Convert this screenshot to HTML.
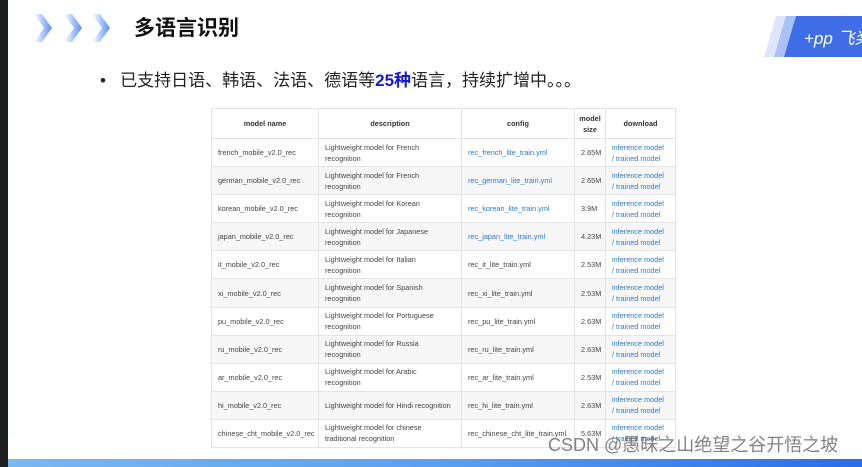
<!DOCTYPE html><html><head><meta charset="utf-8"><style>
*{margin:0;padding:0;box-sizing:border-box}
body{width:862px;height:467px;overflow:hidden;background:#fff;position:relative;font-family:"Liberation Sans","Noto Sans CJK SC",sans-serif}
.l{position:absolute;left:0;top:0;width:8px;height:467px;background:#1e1f1f}
.bar{position:absolute;left:8px;top:459px;width:854px;height:8px;background:linear-gradient(90deg,#7ab8f0,#5aa0f0 50%,#2a6ee8)}
.title{position:absolute;left:134px;top:12px;font-size:21px;font-weight:bold;color:#111}
.bul{position:absolute;left:100px;top:66px;font-size:17px;color:#222;white-space:nowrap}
.bul b{color:#1818d0}
table{position:absolute;left:211px;top:108px;width:465px;border-collapse:collapse;font-size:7.3px;color:#444;table-layout:fixed}
td,th{border:1px solid #e4e4e4;padding:0 6px;height:28.1px;line-height:11px;text-align:left;font-weight:normal;white-space:nowrap;overflow:hidden}
th{height:30px;text-align:center;font-weight:bold;color:#333}
tr:nth-child(odd) td{background:#f7f7f7}
.a{color:#2a7ad0}
.wm{position:absolute;left:548px;top:431px;font-size:18px;color:rgba(90,90,90,.75);white-space:nowrap}
</style></head><body>
<div class="l"></div>
<svg style="position:absolute;left:30px;top:10px" width="100" height="36">
<defs><linearGradient id="g" x1="0" x2="1"><stop offset="0" stop-color="#fff"/><stop offset="1" stop-color="#5b8ff0"/></linearGradient></defs>
<polygon points="4,4 12,4 22,18 12,32 4,32 14,18" fill="url(#g)"/>
<polygon points="34,4 42,4 52,18 42,32 34,32 44,18" fill="url(#g)"/>
<polygon points="62,4 70,4 80,18 70,32 62,32 72,18" fill="url(#g)"/>
</svg>
<div class="title">多语言识别</div>
<svg style="position:absolute;left:764px;top:16px" width="98" height="42">
<polygon points="12,0 98,0 98,41 0,41" fill="#dde6fb"/>
<polygon points="22,0 98,0 98,41 10,41" fill="#a9c1f5"/>
<polygon points="32,0 98,0 98,41 20,41" fill="#3f6ee6"/>
<text x="40" y="28" fill="#fff" font-size="17" font-style="italic" font-family="Liberation Sans">+pp 飞桨</text>
</svg>
<div class="bul">•&nbsp;&nbsp; 已支持日语、韩语、法语、德语等<b>25种</b>语言，持续扩增中。。。</div>
<table>
<colgroup><col style="width:107px"><col style="width:143px"><col style="width:113px"><col style="width:31px"><col></colgroup>
<tr><th>model name</th><th>description</th><th>config</th><th style="padding:0 2px">model<br>size</th><th>download</th></tr>
<tr><td>french_mobile_v2.0_rec</td><td>Lightweight model for French<br>recognition</td><td class="a">rec_french_lite_train.yml</td><td>2.65M</td><td class="a">inference model<br>/ trained model</td></tr>
<tr><td>german_mobile_v2.0_rec</td><td>Lightweight model for French<br>recognition</td><td class="a">rec_german_lite_train.yml</td><td>2.65M</td><td class="a">inference model<br>/ trained model</td></tr>
<tr><td>korean_mobile_v2.0_rec</td><td>Lightweight model for Korean<br>recognition</td><td class="a">rec_korean_lite_train.yml</td><td>3.9M</td><td class="a">inference model<br>/ trained model</td></tr>
<tr><td>japan_mobile_v2.0_rec</td><td>Lightweight model for Japanese<br>recognition</td><td class="a">rec_japan_lite_train.yml</td><td>4.23M</td><td class="a">inference model<br>/ trained model</td></tr>
<tr><td>it_mobile_v2.0_rec</td><td>Lightweight model for Italian<br>recognition</td><td>rec_it_lite_train.yml</td><td>2.53M</td><td class="a">inference model<br>/ trained model</td></tr>
<tr><td>xi_mobile_v2.0_rec</td><td>Lightweight model for Spanish<br>recognition</td><td>rec_xi_lite_train.yml</td><td>2.53M</td><td class="a">inference model<br>/ trained model</td></tr>
<tr><td>pu_mobile_v2.0_rec</td><td>Lightweight model for Portuguese<br>recognition</td><td>rec_pu_lite_train.yml</td><td>2.63M</td><td class="a">inference model<br>/ trained model</td></tr>
<tr><td>ru_mobile_v2.0_rec</td><td>Lightweight model for Russia<br>recognition</td><td>rec_ru_lite_train.yml</td><td>2.63M</td><td class="a">inference model<br>/ trained model</td></tr>
<tr><td>ar_mobile_v2.0_rec</td><td>Lightweight model for Arabic<br>recognition</td><td>rec_ar_lite_train.yml</td><td>2.53M</td><td class="a">inference model<br>/ trained model</td></tr>
<tr><td>hi_mobile_v2.0_rec</td><td>Lightweight model for Hindi recognition</td><td>rec_hi_lite_train.yml</td><td>2.63M</td><td class="a">inference model<br>/ trained model</td></tr>
<tr><td>chinese_cht_mobile_v2.0_rec</td><td>Lightweight model for chinese<br>traditional recognition</td><td>rec_chinese_cht_lite_train.yml</td><td>5.63M</td><td class="a">inference model<br>/ trained model</td></tr>
</table>
<div class="wm">CSDN @愚昧之山绝望之谷开悟之坡</div>
<div class="bar"></div>
</body></html>
